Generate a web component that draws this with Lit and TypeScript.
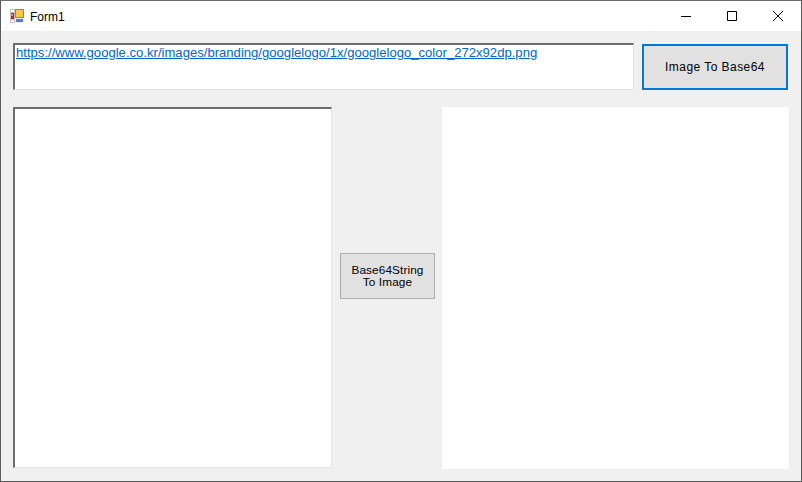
import { LitElement, html, css } from "lit";
import { customElement } from "lit/decorators.js";

@customElement("app-root")
export class AppRoot extends LitElement {
  static styles = css`
    :host { display: block; width: 802px; height: 482px; font-family: "Liberation Sans", Arial, sans-serif; }
    * { box-sizing: border-box; }
    .window { width: 802px; height: 482px; display: flex; flex-direction: column; background: #f0f0f0; border: 1px solid #5a5a5a; border-top-color: #6e6e6e; }
    .titlebar { height: 30px; flex: none; background: #fff; display: flex; align-items: center; padding-left: 9px; }
    .appicon { width: 14px; height: 14px; flex: none; display: block; }
    .title { margin-left: 6px; font-size: 12px; color: #000; position: relative; top: 0.5px; }
    .controls { margin-left: auto; display: flex; }
    .ctl { width: 46px; height: 30px; display: flex; align-items: center; justify-content: center; }
    .ctl svg { display: block; width: 12px; height: 12px; }
    .body { flex: 1; display: grid; grid-template-columns: 319px 110px 347px; grid-template-rows: 47px 361px; row-gap: 17px; padding: 12px 0 0 12px; }
    .url-row { grid-column: 1 / -1; display: flex; gap: 8px; }
    .url { width: 621px; height: 47px; background: #fff; border-style: solid; border-color: #6d6d6d #e3e3e3 #e3e3e3 #6d6d6d; border-width: 2px 1px 1px 2px; padding: 0 0 0 1px; font-size: 13.1px; line-height: 15px; color: #0066cc; text-decoration: underline; white-space: nowrap; overflow: hidden; }
    .btn { background: #e1e1e1; color: #000; font-size: 12px; display: flex; align-items: center; justify-content: center; text-align: center; }
    .primary { width: 146px; height: 46px; margin-top: 1px; border: 2px solid #0078d7; letter-spacing: 0.45px; }
    .left { width: 319px; height: 361px; background: #fff; border-style: solid; border-color: #6d6d6d #e3e3e3 #e3e3e3 #6d6d6d; border-width: 2px 1px 1px 2px; }
    .mid { display: flex; align-items: flex-start; padding: 146px 0 0 8px; }
    .secondary { width: 95px; height: 46px; border: 1px solid #adadad; line-height: 12.5px; letter-spacing: 0.1px; font-size: 11.8px; }
    .right { width: 347px; height: 362px; background: #fff; }
  `;

  render() {
    return html`
      <div class="window">
        <div class="titlebar">
          <svg class="appicon" viewBox="0 0 14 14" shape-rendering="crispEdges">
            <rect x="0" y="0" width="14" height="14" fill="#c4c4c4"/>
            <rect x="1" y="1" width="3" height="2" fill="#fff"/>
            <rect x="1" y="4" width="3" height="6" fill="#b22a22"/>
            <rect x="1" y="5" width="2" height="2" fill="#e88"/>
            <rect x="1" y="11" width="3" height="2" fill="#fff"/>
            <rect x="5" y="0" width="9" height="9" fill="#a8863a"/>
            <rect x="6" y="1" width="7" height="7" fill="#f6c744"/>
            <rect x="5" y="9" width="9" height="5" fill="#e8eef8"/>
            <rect x="6" y="10" width="7" height="3" fill="#4f7fd0"/>
          </svg>
          <span class="title">Form1</span>
          <div class="controls">
            <div class="ctl"><svg viewBox="0 0 12 12"><path d="M1 6.5H11" stroke="#000" fill="none"/></svg></div>
            <div class="ctl"><svg viewBox="0 0 12 12"><path d="M1.5 1.5H10.5V10.5H1.5Z" stroke="#000" fill="none"/></svg></div>
            <div class="ctl"><svg viewBox="0 0 12 12"><path d="M1 1L11 11M11 1L1 11" stroke="#000" fill="none" stroke-width="1"/></svg></div>
          </div>
        </div>
        <div class="body">
          <div class="url-row">
            <div class="url">https://www.google.co.kr/images/branding/googlelogo/1x/googlelogo_color_272x92dp.png</div>
            <div class="btn primary">Image To Base64</div>
          </div>
          <div class="left"></div>
          <div class="mid"><div class="btn secondary">Base64String<br />To Image</div></div>
          <div class="right"></div>
        </div>
      </div>
    `;
  }
}
